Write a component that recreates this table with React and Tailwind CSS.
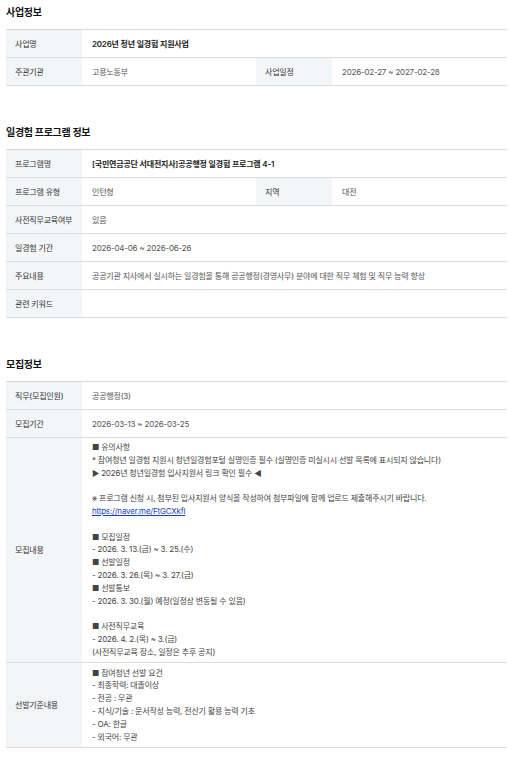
import React from "react";

const FONT = { fontFamily: "Inter, 'Noto Sans CJK KR', sans-serif" };

function SectionTitle({ children, first }) {
  return (
    <h2
      className={`${first ? "" : "mt-[38px]"} h-[16px] leading-[16px] text-[10px] font-bold tracking-[-0.3px] text-[#111] mb-[9px]`}
    >
      {children}
    </h2>
  );
}

function Label({ children }) {
  return (
    <div className="flex items-center bg-[#f3f6f9] pl-[9px] text-[#333]">
      {children}
    </div>
  );
}

function Value({ children, bold }) {
  return (
    <div
      className={`flex items-center pl-[10px] ${bold ? "font-semibold text-[#222]" : "text-[#555]"}`}
    >
      {children}
    </div>
  );
}

function Row({ label, value, bold }) {
  return (
    <div className="grid grid-cols-[76px_1fr] h-[28px] border-b border-[#dcdcdc]">
      <Label>{label}</Label>
      <Value bold={bold}>{value}</Value>
    </div>
  );
}

function PairRow({ a, b }) {
  return (
    <div className="grid grid-cols-[76px_174px_76px_1fr] h-[28px] border-b border-[#dcdcdc]">
      <Label>{a[0]}</Label>
      <Value>{a[1]}</Value>
      <Label>{b[0]}</Label>
      <Value>{b[1]}</Value>
    </div>
  );
}

function Lines({ lines }) {
  return (
    <div className="leading-[12.8px]">
      {lines.map((l, i) =>
        l === "" ? (
          <div key={i} className="h-[12.8px]" />
        ) : l === "LINK" ? (
          <div key={i}>
            <a href="#" className="text-[#1a3fb5] underline">
              https://naver.me/FtGCXkfl
            </a>
          </div>
        ) : (
          <div key={i}>{l}</div>
        )
      )}
    </div>
  );
}

const notice = [
  "■ 유의사항",
  "* 참여청년 일경험 지원시 청년일경험포털 실명인증 필수 (실명인증 미실시시 선발 목록에 표시되지 않습니다)",
  "▶ 2026년 청년일경험 입사지원서 링크 확인 필수 ◀",
  "",
  "※ 프로그램 신청 시, 첨부된 입사지원서 양식을 작성하여 첨부파일에 함께 업로드 제출해주시기 바랍니다.",
  "LINK",
  "",
  "■ 모집일정",
  "- 2026. 3. 13.(금) ~ 3. 25.(수)",
  "■ 선발일정",
  "- 2026. 3. 26.(목) ~ 3. 27.(금)",
  "■ 선발통보",
  "- 2026. 3. 30.(월) 예정(일정상 변동될 수 있음)",
  "",
  "■ 사전직무교육",
  "- 2026. 4. 2.(목) ~ 3.(금)",
  "(사전직무교육 장소, 일정은 추후 공지)",
];

const criteria = [
  "■ 참여청년 선발 요건",
  "- 최종학력: 대졸이상",
  "- 전공 : 무관",
  "- 지식/기술 : 문서작성 능력, 전산기 활용 능력 기초",
  "- OA: 한글",
  "- 외국어: 무관",
];

export default function App() {
  return (
    <div className="bg-white min-h-[758px] pl-[6px] pt-[4px] pr-[23px] text-[8px] tracking-[-0.2px]" style={FONT}>
      {/* 사업정보 */}
      <SectionTitle first>사업정보</SectionTitle>
      <div className="border-t border-[#dcdcdc]">
        <Row label="사업명" value="2026년 청년 일경험 지원사업" bold />
        <PairRow a={["주관기관", "고용노동부"]} b={["사업일정", "2026-02-27 ~ 2027-02-28"]} />
      </div>

      {/* 일경험 프로그램 정보 */}
      <SectionTitle>일경험 프로그램 정보</SectionTitle>
      <div className="border-t border-[#dcdcdc]">
        <Row label="프로그램명" value="[국민연금공단 서대전지사]공공행정 일경험 프로그램 4-1" bold />
        <PairRow a={["프로그램 유형", "인턴형"]} b={["지역", "대전"]} />
        <Row label="사전직무교육여부" value="있음" />
        <Row label="일경험 기간" value="2026-04-06 ~ 2026-06-26" />
        <Row
          label="주요내용"
          value="공공기관 지사에서 실시하는 일경험을 통해 공공행정(경영사무) 분야에 대한 직무 체험 및 직무 능력 향상"
        />
        <Row label="관련 키워드" value="" />
      </div>

      {/* 모집정보 */}
      <SectionTitle>모집정보</SectionTitle>
      <div className="border-t border-[#dcdcdc]">
        <Row label="직무(모집인원)" value="공공행정(3)" />
        <Row label="모집기간" value="2026-03-13 ~ 2026-03-25" />
        <div className="grid grid-cols-[76px_1fr] border-b border-[#dcdcdc]">
          <Label>모집내용</Label>
          <div className="pl-[10px] py-[3px] text-[#444]">
            <Lines lines={notice} />
          </div>
        </div>
        <div className="grid grid-cols-[76px_1fr] border-b border-[#dcdcdc]">
          <Label>선발기준내용</Label>
          <div className="pl-[10px] py-[4px] text-[#444]">
            <Lines lines={criteria} />
          </div>
        </div>
      </div>
    </div>
  );
}
